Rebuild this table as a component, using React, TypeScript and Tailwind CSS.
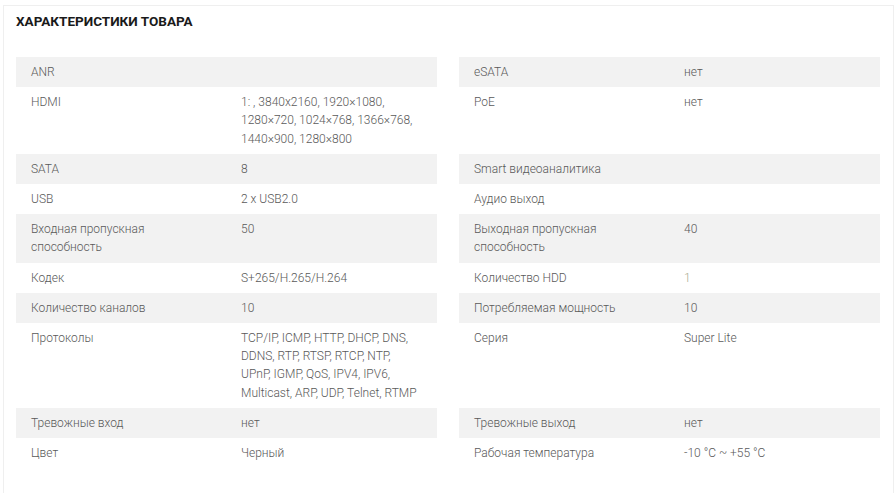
type Spec = { label: string[]; value: string[]; accent?: boolean };

const left: Spec[] = [
  { label: ["ANR"], value: [] },
  { label: ["HDMI"], value: ["1: , 3840x2160, 1920×1080,", "1280×720, 1024×768, 1366×768,", "1440×900, 1280×800"] },
  { label: ["SATA"], value: ["8"] },
  { label: ["USB"], value: ["2 x USB2.0"] },
  { label: ["Входная пропускная", "способность"], value: ["50"] },
  { label: ["Кодек"], value: ["S+265/H.265/H.264"] },
  { label: ["Количество каналов"], value: ["10"] },
  {
    label: ["Протоколы"],
    value: [
      "TCP/IP, ICMP, HTTP, DHCP, DNS,",
      "DDNS, RTP, RTSP, RTCP, NTP,",
      "UPnP, IGMP, QoS, IPV4, IPV6,",
      "Multicast, ARP, UDP, Telnet, RTMP",
    ],
  },
  { label: ["Тревожные вход"], value: ["нет"] },
  { label: ["Цвет"], value: ["Черный"] },
];

const right: Spec[] = [
  { label: ["eSATA"], value: ["нет"] },
  { label: ["PoE"], value: ["нет"] },
  { label: ["Smart видеоаналитика"], value: [] },
  { label: ["Аудио выход"], value: [] },
  { label: ["Выходная пропускная", "способность"], value: ["40"] },
  { label: ["Количество HDD"], value: ["1"], accent: true },
  { label: ["Потребляемая мощность"], value: ["10"] },
  { label: ["Серия"], value: ["Super Lite"] },
  { label: ["Тревожные выход"], value: ["нет"] },
  { label: ["Рабочая температура"], value: ["-10 °C ~ +55 °C"] },
];

function Lines({ lines }: { lines: string[] }) {
  return (
    <>
      {lines.map((l, i) => (
        <div key={i} className="whitespace-nowrap">
          {l}
        </div>
      ))}
    </>
  );
}

function Cell({ spec, gray }: { spec: Spec; gray: boolean }) {
  return (
    <div className={`flex w-[421px] py-[6px] ${gray ? "bg-[#f2f2f2]" : "bg-white"}`}>
      <div className="w-[225px] shrink-0 pl-[15px] text-[#595959]">
        <Lines lines={spec.label} />
      </div>
      <div className={spec.accent ? "text-[#a9ab90]" : "text-[#595959]"}>
        <Lines lines={spec.value} />
      </div>
    </div>
  );
}

export default function App() {
  return (
    <div className="w-[895px] h-[493px] bg-white overflow-hidden" style={{ fontFamily: "Roboto, 'Noto Sans', sans-serif" }}>
      <div className="mt-[5px] ml-[3px] w-[891px] h-[490px] border-t border-l border-r border-[#efefef]">
        <h1 className="pl-[12px] pt-[7px] text-[13.5px] leading-[16px] font-bold text-[#1a1a1a]">
          ХАРАКТЕРИСТИКИ ТОВАРА
        </h1>
        <div className="mt-[28px] ml-[12px] flex flex-col text-[12px] leading-[18.2px] font-light">
          {left.map((l, i) => (
            <div key={i} className="flex gap-[22px]">
              <Cell spec={l} gray={i % 2 === 0} />
              <Cell spec={right[i]} gray={i % 2 === 0} />
            </div>
          ))}
        </div>
      </div>
    </div>
  );
}
